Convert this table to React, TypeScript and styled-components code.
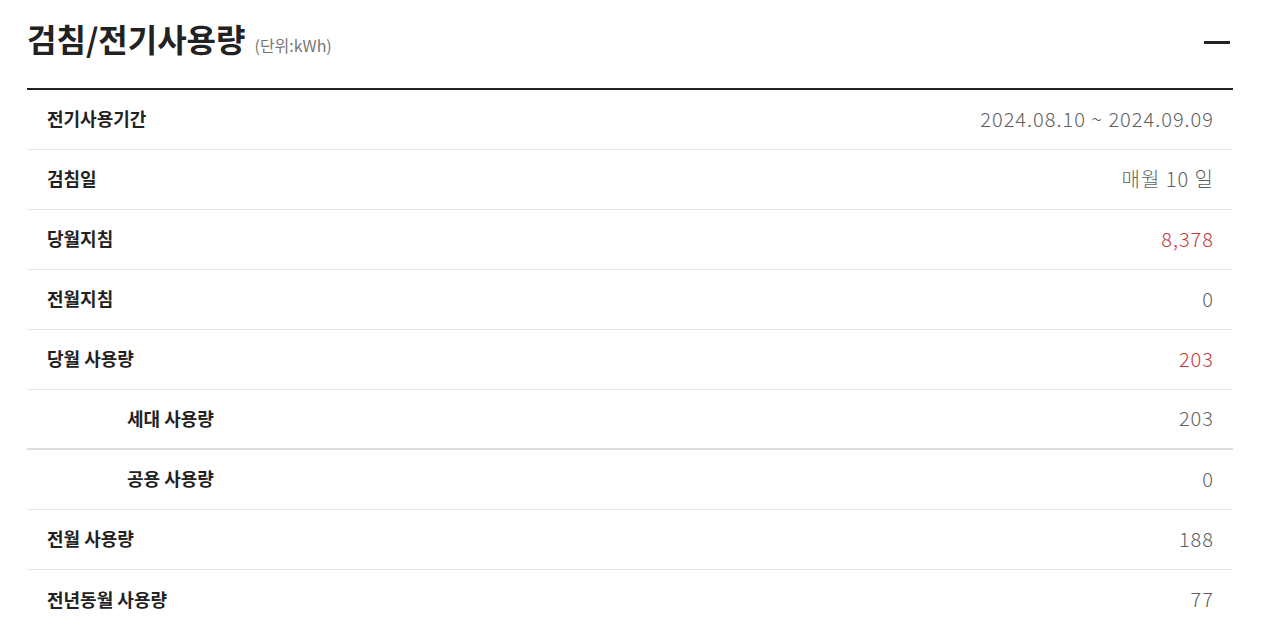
import React from 'react';
import styled, { createGlobalStyle } from 'styled-components';

const GlobalStyle = createGlobalStyle`
  body {
    margin: 0;
    background: #fff;
    font-family: "Noto Sans CJK KR", "Noto Sans", sans-serif;
    color: #222;
  }
`;

const Section = styled.section`
  padding: 0 30px 0 27px;
`;

const Header = styled.div`
  display: flex;
  align-items: center;
  justify-content: space-between;
  height: 90px;
  box-sizing: border-box;
  padding-bottom: 6px;
  border-bottom: 2px solid #222;
`;

const Title = styled.h2`
  margin: 0 0 5px;
  font-size: 32px;
  line-height: 1.2;
  font-weight: 700;
  color: #222;
  display: flex;
  align-items: baseline;
  gap: 9px;
`;

const Unit = styled.span`
  font-size: 16px;
  font-weight: 400;
  color: #777;
`;

const Toggle = styled.button`
  width: 26px;
  height: 26px;
  margin: 2px 3px 0 0;
  padding: 0;
  border: 0;
  background: transparent;
  display: flex;
  align-items: center;
  cursor: pointer;

  &::before {
    content: '';
    display: block;
    width: 26px;
    height: 3px;
    background: #222;
  }
`;

const List = styled.dl`
  margin: 0;
`;

const Row = styled.div<{ $strong?: boolean }>`
  display: flex;
  align-items: center;
  justify-content: space-between;
  height: 60px;
  box-sizing: border-box;
  padding: 0 20px 3px;
  border-bottom: ${p => (p.$strong ? '2px solid #ddd' : '1px solid #e6e6e6')};

  &:last-child {
    border-bottom: 0;
  }
`;

const Label = styled.dt<{ $sub?: boolean }>`
  margin: 0;
  padding-left: ${p => (p.$sub ? '80px' : '0')};
  font-size: 18px;
  font-weight: 700;
  color: #222;
`;

const Value = styled.dd<{ $accent?: boolean }>`
  margin: 0;
  font-size: 20px;
  letter-spacing: 1px;
  margin-right: -1px;
  font-weight: 300;
  color: ${p => (p.$accent ? '#c33a3a' : '#5f5f5f')};
`;

const rows = [
  { label: '전기사용기간', value: '2024.08.10 ~ 2024.09.09' },
  { label: '검침일', value: '매월 10 일' },
  { label: '당월지침', value: '8,378', accent: true },
  { label: '전월지침', value: '0' },
  { label: '당월 사용량', value: '203', accent: true },
  { label: '세대 사용량', value: '203', sub: true, strong: true },
  { label: '공용 사용량', value: '0', sub: true },
  { label: '전월 사용량', value: '188' },
  { label: '전년동월 사용량', value: '77' },
];

export default function App() {
  return (
    <>
      <GlobalStyle />
      <Section>
        <Header>
          <Title>
            검침/전기사용량<Unit>(단위:kWh)</Unit>
          </Title>
          <Toggle aria-label="접기" />
        </Header>
        <List>
          {rows.map(r => (
            <Row key={r.label} $strong={r.strong}>
              <Label $sub={r.sub}>{r.label}</Label>
              <Value $accent={r.accent}>{r.value}</Value>
            </Row>
          ))}
        </List>
      </Section>
    </>
  );
}
